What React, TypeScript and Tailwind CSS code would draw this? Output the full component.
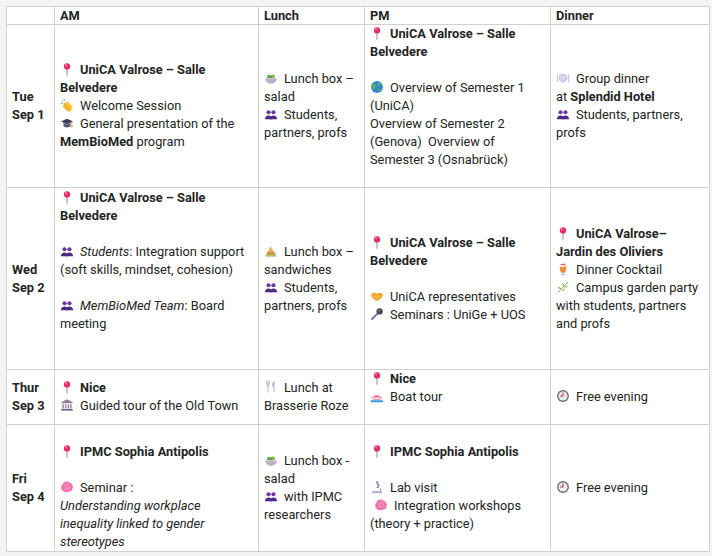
import type { ReactNode } from "react";

type IconName =
  | "pin"
  | "clap"
  | "cap"
  | "salad"
  | "people"
  | "globe"
  | "plate"
  | "sandwich"
  | "handshake"
  | "mic"
  | "cocktail"
  | "herb"
  | "fork"
  | "building"
  | "boat"
  | "clock"
  | "brain"
  | "microscope";

function Glyph({ name }: { name: IconName }) {
  switch (name) {
    case "pin":
      return (
        <>
          <path d="M8 8v7" stroke="#9a9a9a" strokeWidth="1.3" strokeLinecap="round" />
          <circle cx="8" cy="5" r="3.6" fill="#e62f66" />
          <circle cx="6.8" cy="3.8" r="1.1" fill="#ff8fb0" />
        </>
      );
    case "clap":
      return (
        <>
          <path d="M2.2 3.2l1.4 1.2M1.2 6l1.7.4M4.6 1.2l.5 1.7" stroke="#4a9fe0" strokeWidth="1" strokeLinecap="round" />
          <path d="M4.5 6.2c.6-1 1.8-1.1 2.6-.3l5.3 4.8c1.3 1.3 1 3.5-.7 4.3-1.5.7-3.2.3-4.3-.8L3.5 10.3c-.8-.9-.2-2.1.9-2z" fill="#f5b52e" />
          <path d="M6.8 4.4c.7-.9 1.9-.9 2.7-.1l4 4.2c1.1 1.2 1 3-.2 4L8 8z" fill="#ffc83d" />
        </>
      );
    case "cap":
      return (
        <>
          <path d="M8 3l7 3.2-7 3.2-7-3.2z" fill="#3f3d56" />
          <path d="M4 8v3.2c0 1 1.8 2 4 2s4-1 4-2V8L8 9.8z" fill="#57546f" />
          <path d="M13.5 7v4.5" stroke="#f4a13a" strokeWidth="1.2" />
          <circle cx="13.5" cy="12" r="1" fill="#f4a13a" />
        </>
      );
    case "salad":
      return (
        <>
          <circle cx="6" cy="7" r="2.6" fill="#4caf50" />
          <circle cx="10" cy="6.5" r="2.6" fill="#7cc24a" />
          <circle cx="8.3" cy="8" r="1.4" fill="#e53935" />
          <path d="M1.5 8.5h13c0 3.5-2.8 6-6.5 6s-6.5-2.5-6.5-6z" fill="#b8b0c8" />
          <path d="M1.5 8.5h13" stroke="#d8d2e2" strokeWidth="1" />
        </>
      );
    case "people":
      return (
        <>
          <circle cx="5.2" cy="6" r="2.4" fill="#6a3aa0" />
          <circle cx="10.8" cy="6" r="2.4" fill="#6a3aa0" />
          <path d="M1 14c0-2.6 1.9-4.3 4.2-4.3S9.4 11.4 9.4 14z" fill="#4e2a84" />
          <path d="M6.6 14c0-2.6 1.9-4.3 4.2-4.3S15 11.4 15 14z" fill="#4e2a84" />
        </>
      );
    case "globe":
      return (
        <>
          <circle cx="8" cy="8" r="6.8" fill="#2f86d6" />
          <path d="M3.5 4.5c1.5-.5 2.8.2 3 1.5.2 1.4-1.2 1.7-1 3 .2 1.2-.8 2.2-1.8 1.5C2.5 9.5 2 6 3.5 4.5zM9 2.5c1.8 0 3.5 1 4.3 2.8-.9.5-2 .2-2.6 1-.5.7-1.7.5-2-.4-.3-1 .9-1.4.6-2.3z" fill="#62b04a" />
          <path d="M10 10c1.2-.4 2.5.2 2.4 1.3-.6.9-1.6 1.6-2.6 1.9-.5-.9-.6-2.4.2-3.2z" fill="#62b04a" />
        </>
      );
    case "plate":
      return (
        <>
          <rect x="1.2" y="3" width="1" height="10" rx=".5" fill="#c9bde0" />
          <rect x="13.8" y="3" width="1.2" height="10" rx=".6" fill="#c9bde0" />
          <circle cx="8" cy="8" r="5" fill="#cbbfe3" />
          <circle cx="8" cy="8" r="3.3" fill="#ded6ee" />
        </>
      );
    case "sandwich":
      return (
        <>
          <path d="M2 13L7.5 2.5 14 13z" fill="#e8b45c" />
          <path d="M3.2 11.2h9.8l.7 1.3H2.5z" fill="#7cc24a" />
          <path d="M4 9.6h8.2l.6 1.2H3.4z" fill="#e2574c" />
          <path d="M2 13h12v1.3H2z" fill="#d1963e" />
        </>
      );
    case "handshake":
      return (
        <>
          <path d="M1 6.5c1.5-1.8 3.5-2.6 5.5-2l1.5.6 1.5-.6c2-.6 4 .2 5.5 2-1 2.8-3.2 5.4-6.2 6.8-.6.3-1 .3-1.6 0C4.2 11.9 2 9.3 1 6.5z" fill="#f4a52a" />
          <path d="M4 7.5c1.2 1 2.4 1.8 4 2.2 1.4-.4 2.8-1.2 4-2.3" stroke="#ffcf5a" strokeWidth="1.1" fill="none" />
        </>
      );
    case "mic":
      return (
        <>
          <path d="M9 7L2.4 13.6" stroke="#8d6cc0" strokeWidth="2.4" strokeLinecap="round" />
          <circle cx="11" cy="5" r="3.6" fill="#4a4a52" />
          <circle cx="10" cy="4" r="1" fill="#7c7c86" />
        </>
      );
    case "cocktail":
      return (
        <>
          <path d="M9 1.5L11 5" stroke="#e53a5c" strokeWidth="1" />
          <path d="M4.5 3.5c1.5-1.6 4.5-1.6 6 0z" fill="#e53a5c" />
          <path d="M4 5.5h8l-1 5c-.3 1.3-1.6 2-3 2s-2.7-.7-3-2z" fill="#f7893b" />
          <path d="M8 12v2.5M5.5 14.5h5" stroke="#c5b9dd" strokeWidth="1.2" />
        </>
      );
    case "herb":
      return (
        <>
          <path d="M2 14.5C5 11 8.5 7.5 14 2" stroke="#5c9e31" strokeWidth="1" fill="none" />
          <path d="M6 11c-2-.3-3.5-1.5-4-3.5 2 0 3.6 1.2 4 3.5zM9 7.5C7.5 6.5 7 5 7.3 3c1.5 1 2.2 2.6 1.7 4.5zM9.5 9c.5-1.8 2-2.7 4-2.7-.6 1.8-2 2.7-4 2.7zM6.5 12.5c.6-1.5 2-2.2 3.6-2-.6 1.4-2 2.2-3.6 2z" fill="#8cc152" />
        </>
      );
    case "fork":
      return (
        <>
          <path d="M3 1.5v4c0 1 .6 1.7 1.5 1.7S6 6.5 6 5.5v-4M4.5 1.5v4M4.5 7v7" stroke="#bdb0d2" strokeWidth="1.1" fill="none" strokeLinecap="round" />
          <path d="M11 1.5c-1.5 1-2 3.5-1.5 6h1.3V14h1.2V1.5z" fill="#bdb0d2" />
        </>
      );
    case "building":
      return (
        <>
          <path d="M8 1.5l6.5 3.3v1.2h-13V4.8z" fill="#8a7c9c" />
          <path d="M2.8 7h1.6v5H2.8zM5.6 7h1.6v5H5.6zM8.8 7h1.6v5H8.8zM11.6 7h1.6v5h-1.6z" fill="#8a7c9c" />
          <path d="M1.5 12.5h13v2h-13z" fill="#766a88" />
        </>
      );
    case "boat":
      return (
        <>
          <path d="M2 9.5h11.5L12 12H4z" fill="#f4f0f6" stroke="#e36a8e" strokeWidth=".8" />
          <path d="M5 7h5l1.5 2.5H4.5z" fill="#ef6f93" />
          <path d="M1 12.8c1.2-.8 2.2.8 3.5 0s2.3.8 3.5 0 2.3.8 3.5 0 2.3.8 3.5 0V15H1z" fill="#3c9be0" />
        </>
      );
    case "clock":
      return (
        <>
          <circle cx="8" cy="8" r="6.8" fill="#6e6e78" />
          <circle cx="8" cy="8" r="5.2" fill="#ecebf0" />
          <path d="M8 8V4.2M8 8H5.2" stroke="#c0392b" strokeWidth="1.2" strokeLinecap="round" />
        </>
      );
    case "brain":
      return (
        <>
          <path d="M3 5c.3-2 2-3.2 3.8-2.8C7.8 1.5 9.8 1.6 10.7 3c1.8 0 3.3 1.3 3.3 3.1 1 .8 1.2 2.6.2 3.6.3 1.8-1.2 3.3-3 3.1-.8 1.2-2.8 1.5-4 .6-1.3.8-3.2.4-3.8-1C1.8 12 .9 10.2 1.6 8.8.8 7.6 1.6 5.6 3 5z" fill="#f275ae" />
          <path d="M5 5.5c1 .3 1.5 1 1.4 2M9 4c-.5.9-.3 1.8.6 2.4M11 8.5c-1 .1-1.8.8-1.8 1.8M5 10c.8-.6 1.8-.5 2.4.2" stroke="#fbb6d4" strokeWidth=".9" fill="none" strokeLinecap="round" />
        </>
      );
    case "microscope":
      return (
        <>
          <path d="M6.5 1.8l2.2-.8 2.6 6.2-2.2.9z" fill="#8e96c4" />
          <path d="M11.5 9.5c1.3 1.3.8 3.4-.8 3.8" stroke="#8e96c4" strokeWidth="1.3" fill="none" />
          <path d="M7.6 8.8l2.6-1" stroke="#6b6f99" strokeWidth="1.2" />
          <path d="M3 12.5h10.5v2H3z" fill="#b8bcdc" />
          <path d="M2 14.5h12" stroke="#9ea3cc" strokeWidth="1" />
        </>
      );
  }
}

function Emoji({ name, className = "" }: { name: IconName; className?: string }) {
  return (
    <svg
      viewBox="0 0 16 16"
      className={`mr-[6px] inline-block h-[14px] w-[14px] align-[-2px] ${className}`}
    >
      <Glyph name={name} />
    </svg>
  );
}

function Line({ icon, children }: { icon?: IconName; children?: ReactNode }) {
  return (
    <div className="whitespace-nowrap">
      {icon ? <Emoji name={icon} /> : null}
      {children}
    </div>
  );
}

function Blank() {
  return <div className="h-[18px]" />;
}

const cell = "border border-[#d1d1d1] px-[5px] py-0 align-middle";

export default function App() {
  return (
    <div className="min-h-screen bg-[#f3f3f3] pl-[6px] pt-[6px] font-['Roboto',sans-serif] text-[12.8px] leading-[18px] text-[#242424]">
      <table className="w-[703px] table-fixed border-collapse bg-white">
        <colgroup>
          <col className="w-[48px]" />
          <col className="w-[204px]" />
          <col className="w-[106px]" />
          <col className="w-[186px]" />
          <col className="w-[159px]" />
        </colgroup>
        <thead>
          <tr className="h-[18px] text-left font-bold leading-[17px]">
            <th className={cell}></th>
            <th className={cell}>AM</th>
            <th className={cell}>Lunch</th>
            <th className={cell}>PM</th>
            <th className={cell}>Dinner</th>
          </tr>
        </thead>
        <tbody>
          <tr className="h-[162px]">
            <td className={`${cell} font-bold`}>
              <Line>Tue</Line>
              <Line>Sep 1</Line>
            </td>
            <td className={cell}>
              <Line icon="pin">
                <b>UniCA Valrose – Salle</b>
              </Line>
              <Line>
                <b>Belvedere</b>
              </Line>
              <Line icon="clap">Welcome Session</Line>
              <Line icon="cap">General presentation of the</Line>
              <Line>
                <b>MemBioMed</b> program
              </Line>
            </td>
            <td className={cell}>
              <Line icon="salad">Lunch box –</Line>
              <Line>salad</Line>
              <Line icon="people">Students,</Line>
              <Line>partners, profs</Line>
            </td>
            <td className={cell}>
              <Line icon="pin">
                <b>UniCA Valrose – Salle</b>
              </Line>
              <Line>
                <b>Belvedere</b>
              </Line>
              <Blank />
              <Line icon="globe">Overview of Semester 1</Line>
              <Line>(UniCA)</Line>
              <Line>Overview of Semester 2</Line>
              <Line>(Genova)&nbsp; Overview of</Line>
              <Line>Semester 3 (Osnabrück)</Line>
              <Blank />
            </td>
            <td className={cell}>
              <Line icon="plate">Group dinner</Line>
              <Line>
                at <b>Splendid Hotel</b>
              </Line>
              <Line icon="people">Students, partners,</Line>
              <Line>profs</Line>
            </td>
          </tr>

          <tr className="h-[182px]">
            <td className={`${cell} font-bold`}>
              <Line>Wed</Line>
              <Line>Sep 2</Line>
            </td>
            <td className={cell}>
              <Line icon="pin">
                <b>UniCA Valrose – Salle</b>
              </Line>
              <Line>
                <b>Belvedere</b>
              </Line>
              <Blank />
              <Line icon="people">
                <i>Students</i>: Integration support
              </Line>
              <Line>(soft skills, mindset, cohesion)</Line>
              <Blank />
              <Line icon="people">
                <i>MemBioMed Team</i>: Board
              </Line>
              <Line>meeting</Line>
              <Blank />
              <Blank />
            </td>
            <td className={cell}>
              <Line icon="sandwich">Lunch box –</Line>
              <Line>sandwiches</Line>
              <Line icon="people">Students,</Line>
              <Line>partners, profs</Line>
            </td>
            <td className={cell}>
              <Line icon="pin">
                <b>UniCA Valrose – Salle</b>
              </Line>
              <Line>
                <b>Belvedere</b>
              </Line>
              <Blank />
              <Line icon="handshake">UniCA representatives</Line>
              <Line icon="mic">Seminars : UniGe + UOS</Line>
            </td>
            <td className={cell}>
              <Line icon="pin">
                <b>UniCA Valrose–</b>
              </Line>
              <Line>
                <b>Jardin des Oliviers</b>
              </Line>
              <Line icon="cocktail">Dinner Cocktail</Line>
              <Line icon="herb">Campus garden party</Line>
              <Line>with students, partners</Line>
              <Line>and profs</Line>
            </td>
          </tr>

          <tr className="h-[55px]">
            <td className={`${cell} font-bold`}>
              <Line>Thur</Line>
              <Line>Sep 3</Line>
            </td>
            <td className={cell}>
              <Line icon="pin">
                <b>Nice</b>
              </Line>
              <Line icon="building">Guided tour of the Old Town</Line>
            </td>
            <td className={cell}>
              <Line icon="fork">Lunch at</Line>
              <Line>Brasserie Roze</Line>
            </td>
            <td className={cell}>
              <Line icon="pin">
                <b>Nice</b>
              </Line>
              <Line icon="boat">Boat tour</Line>
              <Blank />
            </td>
            <td className={cell}>
              <Line icon="clock">Free evening</Line>
            </td>
          </tr>

          <tr className="h-[127px]">
            <td className={`${cell} font-bold`}>
              <Line>Fri</Line>
              <Line>Sep 4</Line>
            </td>
            <td className={cell}>
              <Blank />
              <Line icon="pin">
                <b>IPMC Sophia Antipolis</b>
              </Line>
              <Blank />
              <Line icon="brain">Seminar :</Line>
              <Line>
                <i>Understanding workplace</i>
              </Line>
              <Line>
                <i>inequality linked to gender</i>
              </Line>
              <Line>
                <i>stereotypes</i>
              </Line>
            </td>
            <td className={cell}>
              <Line icon="salad">Lunch box -</Line>
              <Line>salad</Line>
              <Line icon="people">with IPMC</Line>
              <Line>researchers</Line>
            </td>
            <td className={cell}>
              <Line icon="pin">
                <b>IPMC Sophia Antipolis</b>
              </Line>
              <Blank />
              <Line icon="microscope">Lab visit</Line>
              <div className="whitespace-nowrap">
                <Emoji name="brain" className="ml-[4px]" />
                Integration workshops
              </div>
              <Line>(theory + practice)</Line>
            </td>
            <td className={cell}>
              <Line icon="clock">Free evening</Line>
            </td>
          </tr>
        </tbody>
      </table>
    </div>
  );
}
